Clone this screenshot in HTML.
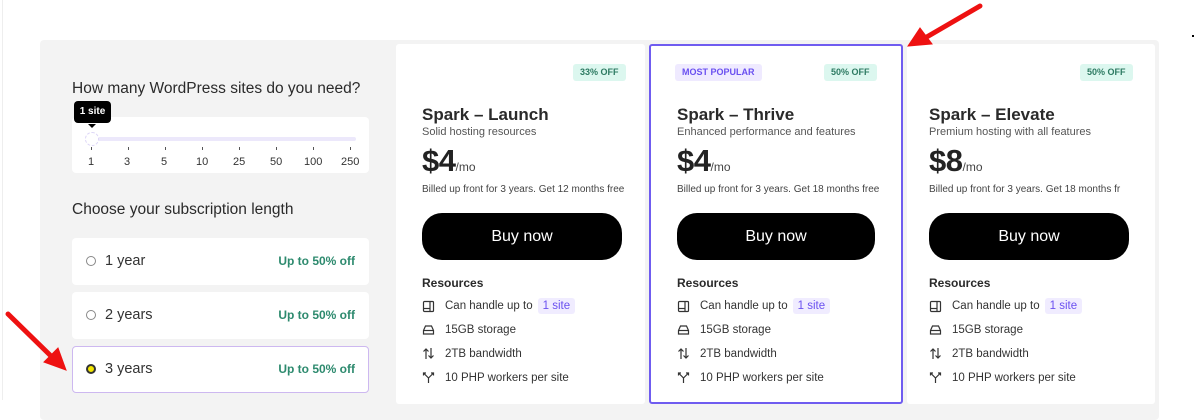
<!DOCTYPE html>
<html><head><meta charset="utf-8"><style>
*{box-sizing:border-box;margin:0;padding:0}
body{width:1200px;height:400px;overflow:hidden;background:#fff;font-family:"Liberation Sans",sans-serif;color:#222;position:relative}
.wrap{position:absolute;left:40px;top:40px;width:1119px;height:380px;background:#f3f3f3;border-radius:4px}
.abs{position:absolute}
.h{font-size:15.5px;color:#2a2a2a}
.slider{left:72px;top:117px;width:297px;height:56px;background:#fff;border-radius:4px}
.track{left:92px;top:137px;width:264px;height:4px;background:#ece8fb;border-radius:2px}
.knob{left:85px;top:132px;width:14px;height:14px;border-radius:50%;background:#fff;border:1px dashed #ddd6f7}
.tip{left:74px;top:101px;width:37px;height:22px;background:#000;color:#fff;font-size:10px;font-weight:bold;border-radius:4px;text-align:center;line-height:22px}
.tip:after{content:"";position:absolute;left:14px;bottom:-5px;border:4px solid transparent;border-top-color:#000;border-bottom:0}
.lbl{font-size:11px;color:#333;top:156px}
.tick{top:147px;width:1px;height:3px;background:#555}
.opt{left:72px;width:297px;height:47px;background:#fff;border-radius:4px;font-size:14.5px}
.opt .r{position:absolute;left:14px;top:18px;width:10px;height:10px;border:1px solid #888;border-radius:50%}
.opt .t{position:absolute;left:33px;top:15px;color:#333}
.opt .o{position:absolute;right:14px;top:16px;font-size:12px;color:#2d8a6e;font-weight:bold}
.card{top:44px;background:#fff;height:360px;border-radius:3px}
.badge{font-size:9px;font-weight:bold;height:17px;line-height:17px;padding:0 7px;border-radius:3px;top:20px}
.off{background:#dcf7ef;color:#2d7a62}
.title{font-size:17px;font-weight:bold;top:61px;color:#2a2a2a}
.sub{font-size:11px;color:#555;top:82px}
.price{font-size:31px;font-weight:bold;top:99px;color:#222;letter-spacing:-0.5px}
.price span{font-size:12px;font-weight:normal;color:#444;letter-spacing:0}
.bill{font-size:10px;color:#444;top:140px}
.btn{top:169px;width:200px;height:47px;background:#000;color:#fff;border-radius:20px;font-size:16px;text-align:center;line-height:47px}
.res{font-size:12px;font-weight:bold;top:232px;color:#2a2a2a}
.li{font-size:11.5px;color:#333;display:flex;align-items:center}
.pill{background:#f0ecff;color:#6a50f0;padding:2px 5px;border-radius:3px;margin-left:5px}
.ic{width:13px;height:13px;margin-right:10px;flex:none}
</style></head><body>
<svg width="0" height="0" style="position:absolute">
<defs>
<g id="i1" fill="none" stroke="#333" stroke-width="1.2"><rect x="1.5" y="1.5" width="10" height="10" rx="1"/><line x1="8" y1="1.5" x2="8" y2="11.5"/><line x1="1.5" y1="8.5" x2="8" y2="8.5"/></g>
<g id="i2" fill="none" stroke="#333" stroke-width="1.2"><path d="M1.5 7.5 L3.5 3 H9.5 L11.5 7.5 V11 H1.5 Z"/><line x1="1.5" y1="7.5" x2="11.5" y2="7.5"/></g>
<g id="i3" fill="none" stroke="#333" stroke-width="1.2"><path d="M4 12 V2 M1.5 4.5 L4 2 L6.5 4.5 M9 1 V11 M6.5 8.5 L9 11 L11.5 8.5"/></g>
<g id="i4" fill="none" stroke="#333" stroke-width="1.2"><path d="M6.5 12 V7 L2 2.5 M6.5 7 L11 2.5 M1.5 4.5 V2 H4 M9 2 H11.5 V4.5"/></g>
</defs></svg>
<div style="position:absolute;left:2px;top:0;width:1px;height:400px;background:#eee"></div>
<div class="wrap"></div>
<div class="abs h" style="left:72px;top:80px">How many WordPress sites do you need?</div>
<div class="abs slider"></div>
<div class="abs track"></div>
<div class="abs knob"></div>
<div class="abs tip">1 site</div>
<div class="abs tick" style="left:91px"></div><div class="abs tick" style="left:128px"></div><div class="abs tick" style="left:165px"></div><div class="abs tick" style="left:202px"></div><div class="abs tick" style="left:239px"></div><div class="abs tick" style="left:276px"></div><div class="abs tick" style="left:313px"></div><div class="abs tick" style="left:350px"></div>
<div class="abs lbl" style="left:88px">1</div><div class="abs lbl" style="left:124px">3</div><div class="abs lbl" style="left:161px">5</div><div class="abs lbl" style="left:196px">10</div><div class="abs lbl" style="left:233px">25</div><div class="abs lbl" style="left:270px">50</div><div class="abs lbl" style="left:304px">100</div><div class="abs lbl" style="left:341px">250</div>
<div class="abs h" style="left:72px;top:201px">Choose your subscription length</div>
<div class="abs opt" style="top:238px"><div class="r"></div><div class="t">1 year</div><div class="o">Up to 50% off</div></div>
<div class="abs opt" style="top:292px"><div class="r"></div><div class="t">2 years</div><div class="o">Up to 50% off</div></div>
<div class="abs opt" style="top:346px;border:1px solid #cdb8f0"><div class="r" style="background:#f2e600;border:2px solid #333;left:13px;top:17px"></div><div class="t" style="left:32px;top:14px">3 years</div><div class="o" style="right:13px;top:15px">Up to 50% off</div></div>

<div class="abs card" style="left:396px;width:249px">
<div class="abs badge off" style="left:177px">33% OFF</div>
<div class="abs title" style="left:26px">Spark – Launch</div>
<div class="abs sub" style="left:26px">Solid hosting resources</div>
<div class="abs price" style="left:26px">$4<span>/mo</span></div>
<div class="abs bill" style="left:26px">Billed up front for 3 years. Get 12 months free</div>
<div class="abs btn" style="left:26px">Buy now</div>
<div class="abs res" style="left:26px">Resources</div>
<div class="abs li" style="left:26px;top:254px"><svg class="ic"><use href="#i1"/></svg>Can handle up to <span class="pill">1 site</span></div>
<div class="abs li" style="left:26px;top:279px"><svg class="ic"><use href="#i2"/></svg>15GB storage</div>
<div class="abs li" style="left:26px;top:303px"><svg class="ic"><use href="#i3"/></svg>2TB bandwidth</div>
<div class="abs li" style="left:26px;top:327px"><svg class="ic"><use href="#i4"/></svg>10 PHP workers per site</div>
</div>
<div class="abs card" style="left:649px;width:254px;border:2px solid #6f5cf0">
<div class="abs badge" style="left:24px;top:18px;background:#efeaff;color:#6a50f0">MOST POPULAR</div>
<div class="abs badge off" style="left:173px;top:18px">50% OFF</div>
<div class="abs title" style="left:26px;top:59px">Spark – Thrive</div>
<div class="abs sub" style="left:26px;top:80px">Enhanced performance and features</div>
<div class="abs price" style="left:26px;top:97px">$4<span>/mo</span></div>
<div class="abs bill" style="left:26px;top:138px">Billed up front for 3 years. Get 18 months free</div>
<div class="abs btn" style="left:26px;top:167px;width:198px">Buy now</div>
<div class="abs res" style="left:26px;top:230px">Resources</div>
<div class="abs li" style="left:26px;top:252px"><svg class="ic"><use href="#i1"/></svg>Can handle up to <span class="pill">1 site</span></div>
<div class="abs li" style="left:26px;top:277px"><svg class="ic"><use href="#i2"/></svg>15GB storage</div>
<div class="abs li" style="left:26px;top:301px"><svg class="ic"><use href="#i3"/></svg>2TB bandwidth</div>
<div class="abs li" style="left:26px;top:325px"><svg class="ic"><use href="#i4"/></svg>10 PHP workers per site</div>
</div>
<div class="abs card" style="left:907px;width:248px;overflow:hidden">
<div class="abs badge off" style="left:173px">50% OFF</div>
<div class="abs title" style="left:22px">Spark – Elevate</div>
<div class="abs sub" style="left:22px">Premium hosting with all features</div>
<div class="abs price" style="left:22px">$8<span>/mo</span></div>
<div class="abs bill" style="left:22px;white-space:nowrap">Billed up front for 3 years. Get 18 months fr</div>
<div class="abs btn" style="left:22px">Buy now</div>
<div class="abs res" style="left:22px">Resources</div>
<div class="abs li" style="left:22px;top:254px"><svg class="ic"><use href="#i1"/></svg>Can handle up to <span class="pill">1 site</span></div>
<div class="abs li" style="left:22px;top:279px"><svg class="ic"><use href="#i2"/></svg>15GB storage</div>
<div class="abs li" style="left:22px;top:303px"><svg class="ic"><use href="#i3"/></svg>2TB bandwidth</div>
<div class="abs li" style="left:22px;top:327px"><svg class="ic"><use href="#i4"/></svg>10 PHP workers per site</div>
</div>
<svg class="abs" style="left:0;top:0" width="1200" height="400">
<g stroke="#ee1111" stroke-width="5" stroke-linecap="round" fill="#ee1111">
<line x1="980" y1="6" x2="925" y2="38"/>
<polygon points="908,46 920,28 932,44" stroke-width="1"/>
<line x1="8" y1="314" x2="52" y2="357"/>
<polygon points="66,370 44,362 58,348" stroke-width="1"/>
</g>
<rect x="1192" y="35" width="2" height="2" fill="#000"/>
</svg>
</body></html>
